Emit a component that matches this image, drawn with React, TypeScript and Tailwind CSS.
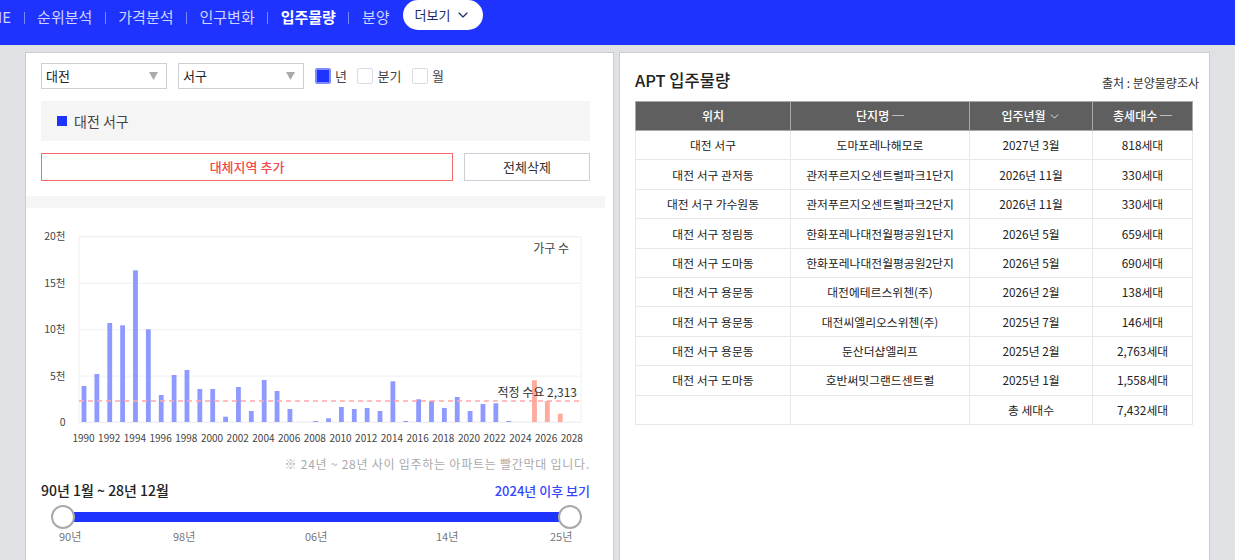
import { ChevronDown } from "lucide-react";

const font = '"Noto Sans CJK KR", "Noto Sans", sans-serif';

const navItems = ["HOME", "순위분석", "가격분석", "인구변화", "입주물량", "분양"];

const bars: number[] = [36, 48, 99, 96.7, 151.7, 92.7, 27, 47, 52, 33, 33, 5.3, 35, 11, 42, 31, 13, 0, 1, 3.7, 15, 13, 14, 11, 40.7, 1, 22.7, 21, 14, 25, 11, 18, 18.7, 1, 0, 41.7, 21, 8.3];

const rows = [
  ["대전 서구", "도마포레나해모로", "2027년 3월", "818세대"],
  ["대전 서구 관저동", "관저푸르지오센트럴파크1단지", "2026년 11월", "330세대"],
  ["대전 서구 가수원동", "관저푸르지오센트럴파크2단지", "2026년 11월", "330세대"],
  ["대전 서구 정림동", "한화포레나대전월평공원1단지", "2026년 5월", "659세대"],
  ["대전 서구 도마동", "한화포레나대전월평공원2단지", "2026년 5월", "690세대"],
  ["대전 서구 용문동", "대전에테르스위첸(주)", "2026년 2월", "138세대"],
  ["대전 서구 용문동", "대전씨엘리오스위첸(주)", "2025년 7월", "146세대"],
  ["대전 서구 용문동", "둔산더샵엘리프", "2025년 2월", "2,763세대"],
  ["대전 서구 도마동", "호반써밋그랜드센트럴", "2025년 1월", "1,558세대"],
  ["", "", "총 세대수", "7,432세대"],
];

function Select({ label }: { label: string }) {
  return (
    <div className="flex h-[26px] w-[126px] items-center justify-between border border-[#ccd0d6] bg-white pl-[4px] pr-[8px] text-[13px] text-[#222]">
      <span>{label}</span>
      <svg width="9" height="8" viewBox="0 0 9 8">
        <path d="M0 0h9L4.5 8z" fill="#aaaaaa" />
      </svg>
    </div>
  );
}

function Check({ label, on }: { label: string; on?: boolean }) {
  return (
    <div className="flex items-center gap-[4px] text-[13px] text-[#444]">
      <span
        className={
          on
            ? "h-[16px] w-[16px] rounded-[2px] border-2 border-[#7f8cff] bg-[#1f33ff]"
            : "h-[16px] w-[16px] rounded-[2px] border border-[#d8dae0] bg-white"
        }
      />
      <span>{label}</span>
    </div>
  );
}

function Chart() {
  const base = 214;
  const left = 53;
  const right = 555;
  const grid = [0, 1, 2, 3, 4].map((i) => base - i * 46.4);
  const labels = ["0", "5천", "10천", "15천", "20천"];
  const tx = font;
  return (
    <svg width="587" height="240" className="block">
      <rect x={left} y={base - 185.6} width={right - left} height={185.6} fill="white" stroke="#f0f0f0" />
      {grid.map((g, i) => (
        <line key={i} x1={left} x2={right} y1={g + 0.5} y2={g + 0.5} stroke="#f0f0f0" />
      ))}
      {labels.map((l, i) => (
        <text key={l} x={39.5} y={grid[i] + 4} textAnchor="end" fontSize="10.5" fill="#444" fontFamily={tx}>
          {l}
        </text>
      ))}
      {bars.map((h, i) =>
        h > 0 ? (
          <rect
            key={i}
            x={58 + i * 12.87 - 2.4}
            y={base - h}
            width={4.8}
            height={h}
            fill={i >= 35 ? "#ffaa9c" : "#8e9aff"}
          />
        ) : null
      )}
      <line x1={left} x2={right} y1={base - 21} y2={base - 21} stroke="#ffa8a8" strokeWidth="1.5" strokeDasharray="5 4" />
      {Array.from({ length: 20 }, (_, i) => (
        <text key={i} x={57.5 + i * 25.7} y={base + 20} textAnchor="middle" fontSize="10" fill="#444" fontFamily={tx}>
          {1990 + i * 2}
        </text>
      ))}
      <text x={543} y={45} textAnchor="end" fontSize="12" fill="#444" fontFamily={tx}>
        가구 수
      </text>
      <text x={551} y={base - 25} textAnchor="end" fontSize="12" fill="#333" fontFamily={tx}>
        적정 수요 2,313
      </text>
    </svg>
  );
}

export default function App() {
  return (
    <div className="flex h-[560px] w-[1235px] flex-col overflow-hidden bg-[#e0e1e5]" style={{ fontFamily: font }}>
      <nav className="flex h-[45px] shrink-0 items-start bg-[#1f33ff]">
        <div className="flex h-[35px] items-center -ml-[32px] gap-[12.5px] text-[15px] text-[#d0d4ff]">
          {navItems.map((item, i) => (
            <div key={item} className="flex items-center gap-[12.5px]">
              {i > 0 && <span className="h-[12px] w-px bg-[#7c88ff]" />}
              <span className={item === "입주물량" ? "font-bold text-white" : ""}>{item}</span>
            </div>
          ))}
          <button className="ml-px flex h-[30px] w-[80px] items-center justify-center gap-[5px] self-start rounded-full bg-white text-[13px] text-[#1f2a66]">
            더보기
            <ChevronDown size={16} strokeWidth={1.75} />
          </button>
        </div>
      </nav>

      <main className="flex gap-[5px] pl-[25px] pt-[7px]">
        <section className="h-[520px] w-[589px] shrink-0 border border-[#cbccd1] bg-white">
          <div className="pl-[15px] pr-[23px] pt-[10px]">
            <div className="flex items-center">
              <Select label="대전" />
              <div className="ml-[11px]">
                <Select label="서구" />
              </div>
              <div className="ml-[11px] flex items-center gap-[10.5px]">
                <Check label="년" on />
                <Check label="분기" />
                <Check label="월" />
              </div>
            </div>
            <div className="mt-[12px] flex h-[40px] items-center gap-[7px] bg-[#f5f5f5] pl-[16px] text-[14px] text-[#444]">
              <span className="h-[10px] w-[10px] bg-[#1f33ff]" />
              대전 서구
            </div>
            <div className="mt-[12px] flex justify-between">
              <button className="h-[28px] w-[412px] border border-[#f86a6a] bg-white text-[13px] font-medium text-[#f04a4a]">
                대체지역 추가
              </button>
              <button className="h-[28px] w-[126px] border border-[#ccd0d6] bg-white text-[13px] text-[#333]">
                전체삭제
              </button>
            </div>
          </div>
          <div className="mt-[15px] h-[12px] w-[579px] bg-[#f5f5f5]" />
          <Chart />
          <div className="mt-[8px] pr-[23px] text-right text-[12px] leading-[16px] tracking-[0.75px] text-[#aaaaaa]">
            ※ 24년 ~ 28년 사이 입주하는 아파트는 빨간막대 입니다.
          </div>
          <div className="mt-[8px] flex items-center justify-between pl-[15px] pr-[23px]">
            <span className="text-[14px] font-medium text-[#222]">90년 1월 ~ 28년 12월</span>
            <span className="text-[13px] font-medium text-[#3646ff]">2024년 이후 보기</span>
          </div>
          <div className="relative ml-[37px] mt-[11px] h-[10px] w-[507px] bg-[#1f33ff]">
            <span className="absolute -left-[12px] -top-[7px] h-[24px] w-[24px] rounded-full border-2 border-[#a9a9a9] bg-white" />
            <span className="absolute -right-[12px] -top-[7px] h-[24px] w-[24px] rounded-full border-2 border-[#a9a9a9] bg-white" />
          </div>
          <div className="ml-[33px] mt-[6px] flex text-[11px] text-[#777]">
            <span className="w-[114px]">90년</span>
            <span className="w-[132px]">98년</span>
            <span className="w-[131px]">06년</span>
            <span className="w-[114px]">14년</span>
            <span>25년</span>
          </div>
        </section>

        <section className="h-[520px] w-[591px] shrink-0 border border-[#cbccd1] bg-white pl-[15px] pr-[10px]">
          <div className="flex items-end justify-between pt-[15px]">
            <h2 className="text-[16.5px] font-medium leading-[24px] text-[#222]">APT 입주물량</h2>
            <span className="text-[12px] leading-[18px] text-[#333]">출처 : 분양물량조사</span>
          </div>
          <table className="mt-[9px] w-[557px] table-fixed border-collapse text-center text-[11.8px] text-[#222]">
            <colgroup>
              <col className="w-[155px]" />
              <col className="w-[179px]" />
              <col className="w-[123px]" />
              <col className="w-[100px]" />
            </colgroup>
            <thead>
              <tr className="h-[29px] bg-[#5f5f5f] text-[12px] font-medium text-white">
                <th className="border border-[#a8a8a8] font-medium">위치</th>
                <th className="border border-[#a8a8a8] font-medium">단지명 ─</th>
                <th className="border border-[#a8a8a8] font-medium">
                  <span className="inline-flex items-center gap-[2px]">
                    입주년월
                    <ChevronDown size={13} strokeWidth={1.5} />
                  </span>
                </th>
                <th className="border border-[#a8a8a8] font-medium">총세대수 ─</th>
              </tr>
            </thead>
            <tbody>
              {rows.map((r, i) => (
                <tr key={i} className="h-[29.4px]">
                  {r.map((c, j) => (
                    <td key={j} className="border border-[#e8e8e8] p-0">
                      {c}
                    </td>
                  ))}
                </tr>
              ))}
            </tbody>
          </table>
        </section>
      </main>
    </div>
  );
}
